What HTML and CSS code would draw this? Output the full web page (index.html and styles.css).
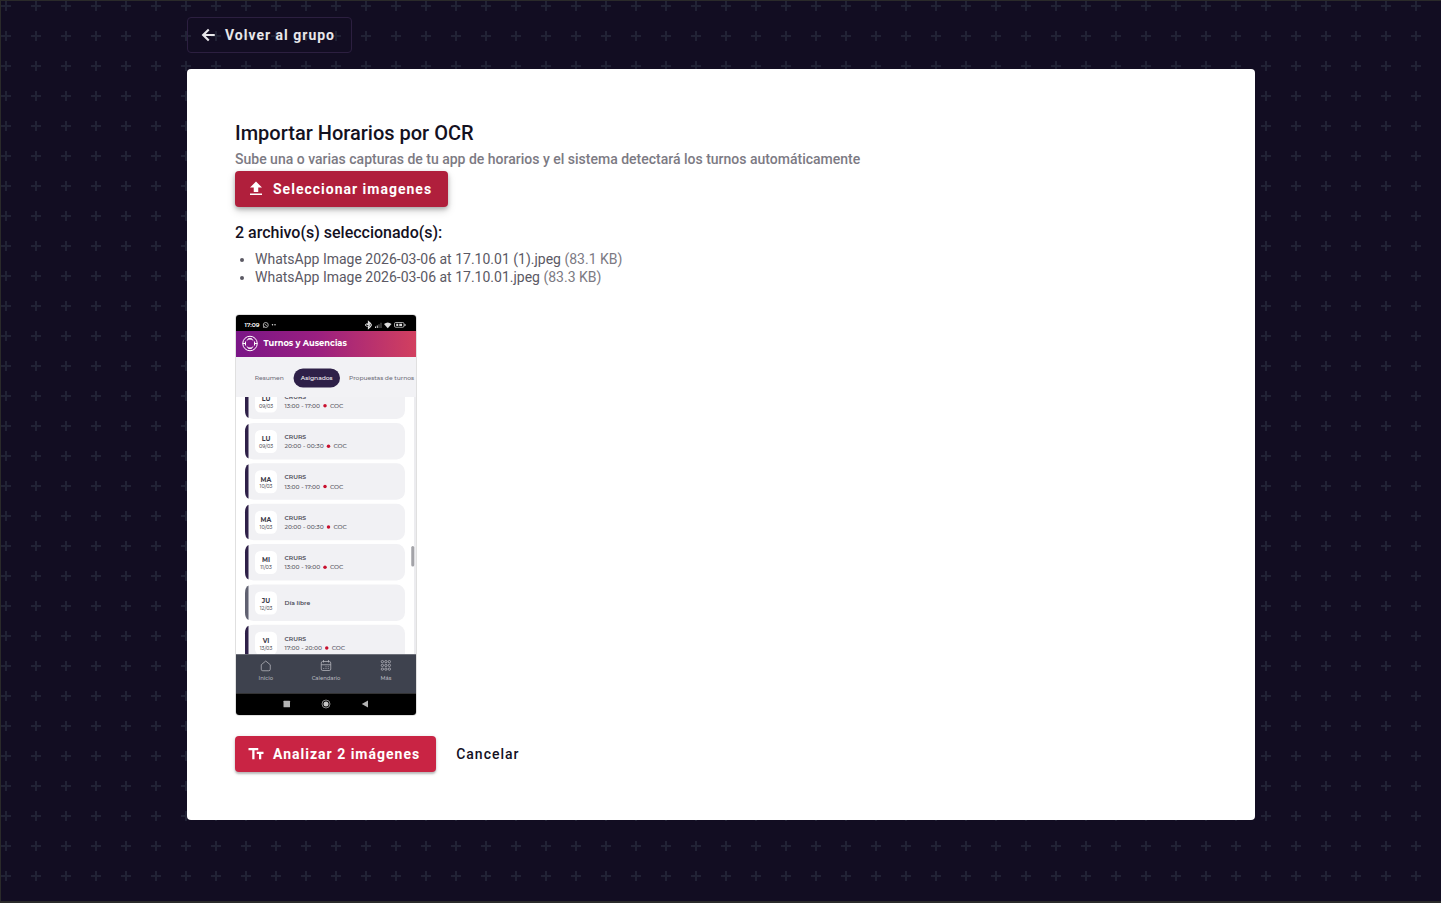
FILE: index.html
```html
<!DOCTYPE html>
<html lang="es">
<head>
    <meta charset="UTF-8">
    <meta name="viewport" content="width=device-width, initial-scale=1.0">
    <title>Importar Horarios por OCR</title>
    <link rel="stylesheet" href="styles.css">
</head>
<body>
    <main class="container">
        <a href="#" class="btn btn-outline">
            <svg class="icon" viewBox="0 0 24 24"><path d="M21 10.6v2.8H9l5 5-2 2L3.5 12 12 3.6l2 2-5 5h12z"/></svg>
            Volver al grupo
        </a>

        <section class="card">
            <h1 class="title">Importar Horarios por OCR</h1>
            <p class="subtitle">Sube una o varias capturas de tu app de horarios y el sistema detectará los turnos automáticamente</p>
            <button type="button" class="btn btn-primary btn-select">
                <svg class="icon" viewBox="0 0 24 24"><path d="M9 16v-6H4l8-8 8 8h-5v6H9m-5 4v-2h16v2H4z"/></svg>
                Seleccionar imagenes
            </button>

            <h2 class="files-title">2 archivo(s) seleccionado(s):</h2>
            <ul class="files">
                <li>WhatsApp Image 2026-03-06 at 17.10.01 (1).jpeg <span class="size">(83.1 KB)</span></li>
                <li>WhatsApp Image 2026-03-06 at 17.10.01.jpeg <span class="size">(83.3 KB)</span></li>
            </ul>

            <div class="preview">
                <svg class="capture" viewBox="0 0 720 1600">
                    <defs>
                        <linearGradient id="bar" x1="0" y1="0" x2="1" y2="0">
                            <stop offset="0" stop-color="#7a1687"/>
                            <stop offset="0.45" stop-color="#9a1f80"/>
                            <stop offset="1" stop-color="#d2405f"/>
                        </linearGradient>
                        <clipPath id="list"><rect x="0" y="328" width="720" height="1029"/></clipPath>
                        <g id="shift">
                            <rect x="36" width="640" height="146" rx="34" fill="#f1f1f4"/>
                            <path d="M50 4Q36 10 36 34V112Q36 136 50 142Z" fill="currentColor"/>
                            <rect x="76" y="28" width="88" height="92" rx="22" fill="#fff"/>
                        </g>
                    </defs>
                    <rect width="720" height="1600" fill="#fff"/>

                    <!-- turnos -->
                    <g clip-path="url(#list)">
                        <rect x="712" y="328" width="8" height="1029" fill="#ececef"/>
                        <g transform="translate(0 270)">
                            <use href="#shift" class="bar-work"/>
                            <text x="120" y="73" class="day">LU</text><text x="120" y="100" class="date">09/03</text>
                            <text x="194" y="64" class="place">CRURS</text><text x="194" y="101" class="hours">13:00 - 17:00</text>
                            <circle cx="356" cy="93" r="7" class="dot"/><text x="376" y="101" class="hours">COC</text>
                        </g>
                        <g transform="translate(0 432)">
                            <use href="#shift" class="bar-work"/>
                            <text x="120" y="73" class="day">LU</text><text x="120" y="100" class="date">09/03</text>
                            <text x="194" y="64" class="place">CRURS</text><text x="194" y="101" class="hours">20:00 - 00:30</text>
                            <circle cx="370" cy="93" r="7" class="dot"/><text x="390" y="101" class="hours">COC</text>
                        </g>
                        <g transform="translate(0 593)">
                            <use href="#shift" class="bar-work"/>
                            <text x="120" y="73" class="day">MA</text><text x="120" y="100" class="date">10/03</text>
                            <text x="194" y="64" class="place">CRURS</text><text x="194" y="101" class="hours">13:00 - 17:00</text>
                            <circle cx="356" cy="93" r="7" class="dot"/><text x="376" y="101" class="hours">COC</text>
                        </g>
                        <g transform="translate(0 755)">
                            <use href="#shift" class="bar-work"/>
                            <text x="120" y="73" class="day">MA</text><text x="120" y="100" class="date">10/03</text>
                            <text x="194" y="64" class="place">CRURS</text><text x="194" y="101" class="hours">20:00 - 00:30</text>
                            <circle cx="370" cy="93" r="7" class="dot"/><text x="390" y="101" class="hours">COC</text>
                        </g>
                        <g transform="translate(0 916)">
                            <use href="#shift" class="bar-work"/>
                            <text x="120" y="73" class="day">MI</text><text x="120" y="100" class="date">11/03</text>
                            <text x="194" y="64" class="place">CRURS</text><text x="194" y="101" class="hours">13:00 - 19:00</text>
                            <circle cx="356" cy="93" r="7" class="dot"/><text x="376" y="101" class="hours">COC</text>
                        </g>
                        <g transform="translate(0 1078)">
                            <use href="#shift" class="bar-free"/>
                            <text x="120" y="73" class="day">JU</text><text x="120" y="100" class="date">12/03</text>
                            <text x="194" y="83" class="place">Día libre</text>
                        </g>
                        <g transform="translate(0 1239)">
                            <use href="#shift" class="bar-work"/>
                            <text x="120" y="73" class="day">VI</text><text x="120" y="100" class="date">13/03</text>
                            <text x="194" y="64" class="place">CRURS</text><text x="194" y="101" class="hours">17:00 - 20:00</text>
                            <circle cx="363" cy="93" r="7" class="dot"/><text x="383" y="101" class="hours">COC</text>
                        </g>
                        <rect x="701" y="924" width="12" height="82" rx="6" fill="#a3a3a8"/>
                    </g>

                    <!-- barra de estado -->
                    <rect width="720" height="64" fill="#000"/>
                    <text x="34" y="49" class="clock">17:09</text>
                    <g fill="none" stroke="#ddd" stroke-width="3">
                        <circle cx="119" cy="40" r="10"/>
                        <path d="M110 51l2-6M115 36l8 8"/>
                        <path d="M522 34l16 12-8 7V27l8 7-16 12" stroke-width="5"/>
                        <rect x="634" y="30" width="38" height="19" rx="5"/>
                    </g>
                    <g fill="#ddd">
                        <circle cx="146" cy="39" r="3"/><circle cx="156" cy="39" r="3"/>
                        <path d="M516 37h6v6h-6zM538 37h6v6h-6z"/>
                        <path d="M556 46h4v6h-4zM563 42h4v10h-4z"/>
                        <path d="M570 37h4v15h-4zM578 31h4v21h-4z" fill="#666"/>
                        <path d="M592 36q15-13 30 0l-15 17z"/>
                        <path d="M674 36h4v8h-4zM641 35h8v9h-8zM653 35h11v9h-11z"/>
                    </g>

                    <!-- cabecera -->
                    <rect y="64" width="720" height="104" fill="url(#bar)"/>
                    <g fill="none" stroke="#fff" stroke-width="4">
                        <circle cx="56" cy="114" r="29"/>
                        <path d="M26 114h12M74 114h12M38 106v16M74 106v16M43 102q13-16 26 0M43 126q13 16 26 0M48 96h16M48 132h16"/>
                    </g>
                    <text x="110" y="125" class="app-title">Turnos y Ausencias</text>

                    <rect y="168" width="720" height="160" fill="#f2f2f5"/>
                    <rect x="230" y="214" width="186" height="76" rx="38" fill="#2e2048"/>
                    <text x="133" y="260" class="tab" text-anchor="middle">Resumen</text>
                    <text x="323" y="260" class="tab tab-active" text-anchor="middle">Asignados</text>
                    <text x="452" y="260" class="tab">Propuestas de turnos</text>

                    <!-- menu inferior -->
                    <rect y="1357" width="720" height="156" fill="#3e424e"/>
                    <g fill="none" stroke="#b9bac0" stroke-width="3">
                        <path d="M119 1384l-18 15v18q0 6 6 6h24q6 0 6-6v-18z"/>
                        <rect x="341" y="1386" width="38" height="36" rx="6"/>
                        <path d="M341 1399h38M350 1380v10M370 1380v10M349 1414h4M358 1414h4M367 1414h4M358 1407h4M367 1407h4"/>
                        <g id="dots">
                            <rect x="581" y="1382" width="9" height="9" rx="4"/>
                            <rect x="595" y="1382" width="9" height="9" rx="4"/>
                            <rect x="609" y="1382" width="9" height="9" rx="4"/>
                        </g>
                        <use href="#dots" y="15"/>
                        <use href="#dots" y="30"/>
                    </g>
                    <text x="119" y="1459" class="menu">Inicio</text>
                    <text x="360" y="1459" class="menu">Calendario</text>
                    <text x="600" y="1459" class="menu">Más</text>

                    <rect y="1513" width="720" height="87" fill="#000"/>
                    <rect x="190" y="1543" width="26" height="26" rx="2" fill="#b4b4b4"/>
                    <circle cx="360" cy="1556" r="16" fill="none" stroke="#b4b4b4" stroke-width="3"/>
                    <circle cx="360" cy="1556" r="10" fill="#c8c8c8"/>
                    <path d="M503 1556l25-14v28z" fill="#b4b4b4"/>
                </svg>
            </div>

            <div class="actions">
                <button type="button" class="btn btn-primary">
                    <svg class="icon" viewBox="0 0 24 24"><path d="M2 4v3h5v12h3V7h5V4H2m20 5h-9v3h3v7h3v-7h3V9z"/></svg>
                    Analizar 2 imágenes
                </button>
                <button type="button" class="btn btn-text">Cancelar</button>
            </div>
        </section>
    </main>
</body>
</html>
```

FILE: styles.css
```css
* {
    margin: 0;
    padding: 0;
    box-sizing: border-box;
}

body {
    min-height: 100vh;
    font-family: Roboto, sans-serif;
    color: #14111f;
    background-color: #120d22;
    background-image: url("data:image/svg+xml,%3Csvg xmlns='http://www.w3.org/2000/svg' width='30' height='30'%3E%3Cpath d='M4 0h2v4h4v2H6v4H4V6H0V4h4z' fill='%23212235'/%3E%3C/svg%3E");
    background-position: 1px 1px;
    border: 1px solid #2a2a2a;
    border-right: 0;
    border-bottom-width: 2px;
}

.container {
    max-width: 1100px;
    margin: 0 auto;
    padding: 16px;
}

.btn {
    display: inline-flex;
    align-items: center;
    gap: 8px;
    height: 36px;
    padding: 0 16px 0 12px;
    border: 0;
    border-radius: 4px;
    font-family: inherit;
    font-size: 14px;
    font-weight: 700;
    letter-spacing: 1px;
    text-decoration: none;
    cursor: pointer;
}

.icon {
    width: 18px;
    height: 18px;
    fill: currentColor;
}

.btn-outline {
    padding: 0 16px 0 11px;
    border: 1px solid #2c1f40;
    color: #e8e7ea;
}

.btn-primary {
    background-color: #c92444;
    color: #fff;
    box-shadow: 0 2px 2px rgba(0, 0, 0, 0.2), 0 1px 4px rgba(0, 0, 0, 0.15);
}

.btn-select {
    background-color: #b01f3c;
    box-shadow: 0 2px 4px rgba(0, 0, 0, 0.25), 0 4px 8px rgba(0, 0, 0, 0.15);
}

.btn-text {
    padding: 0 16px;
    background: none;
    color: #14111f;
    font-weight: 500;
}

.card {
    margin-top: 16px;
    padding: 48px;
    background-color: #fff;
    border-radius: 4px;
}

.title {
    font-size: 20px;
    font-weight: 500;
    line-height: 32px;
}

.subtitle {
    margin-bottom: 2px;
    font-size: 14px;
    font-weight: 500;
    line-height: 20px;
    color: #7c7a83;
}

.files-title {
    margin-top: 14px;
    font-size: 16px;
    font-weight: 500;
    line-height: 24px;
}

.files {
    margin-top: 5px;
    padding-left: 20px;
    font-size: 14px;
    line-height: 18px;
    color: #5b5964;
}

.size {
    color: #7c7a83;
}

.preview {
    width: 182px;
    margin-top: 28px;
    border: 1px solid #e0e0e0;
    border-radius: 4px;
    overflow: hidden;
}

.capture {
    display: block;
    width: 100%;
    font-family: Montserrat, Inter, sans-serif;
}

.bar-work {
    color: #2e2048;
}

.bar-free {
    color: #5f6070;
}

.day {
    font-size: 25px;
    font-weight: 700;
    text-anchor: middle;
    fill: #3c3b48;
}

.date {
    font-size: 20px;
    font-weight: 500;
    text-anchor: middle;
    fill: #5c5b66;
}

.place {
    font-size: 24px;
    font-weight: 600;
    fill: #4a4956;
}

.hours {
    font-size: 24px;
    font-weight: 500;
    fill: #5c5b66;
}

.dot {
    fill: #c8102e;
}

.clock {
    font-size: 24px;
    font-weight: 600;
    fill: #fff;
}

.app-title {
    font-size: 33px;
    font-weight: 700;
    fill: #fff;
}

.tab {
    font-size: 24px;
    font-weight: 500;
    fill: #6c6b75;
}

.tab-active {
    font-weight: 500;
    fill: #fff;
}

.menu {
    font-size: 21px;
    font-weight: 500;
    text-anchor: middle;
    fill: #b9bac0;
}

.actions {
    display: flex;
    gap: 4px;
    margin-top: 20px;
}
```
